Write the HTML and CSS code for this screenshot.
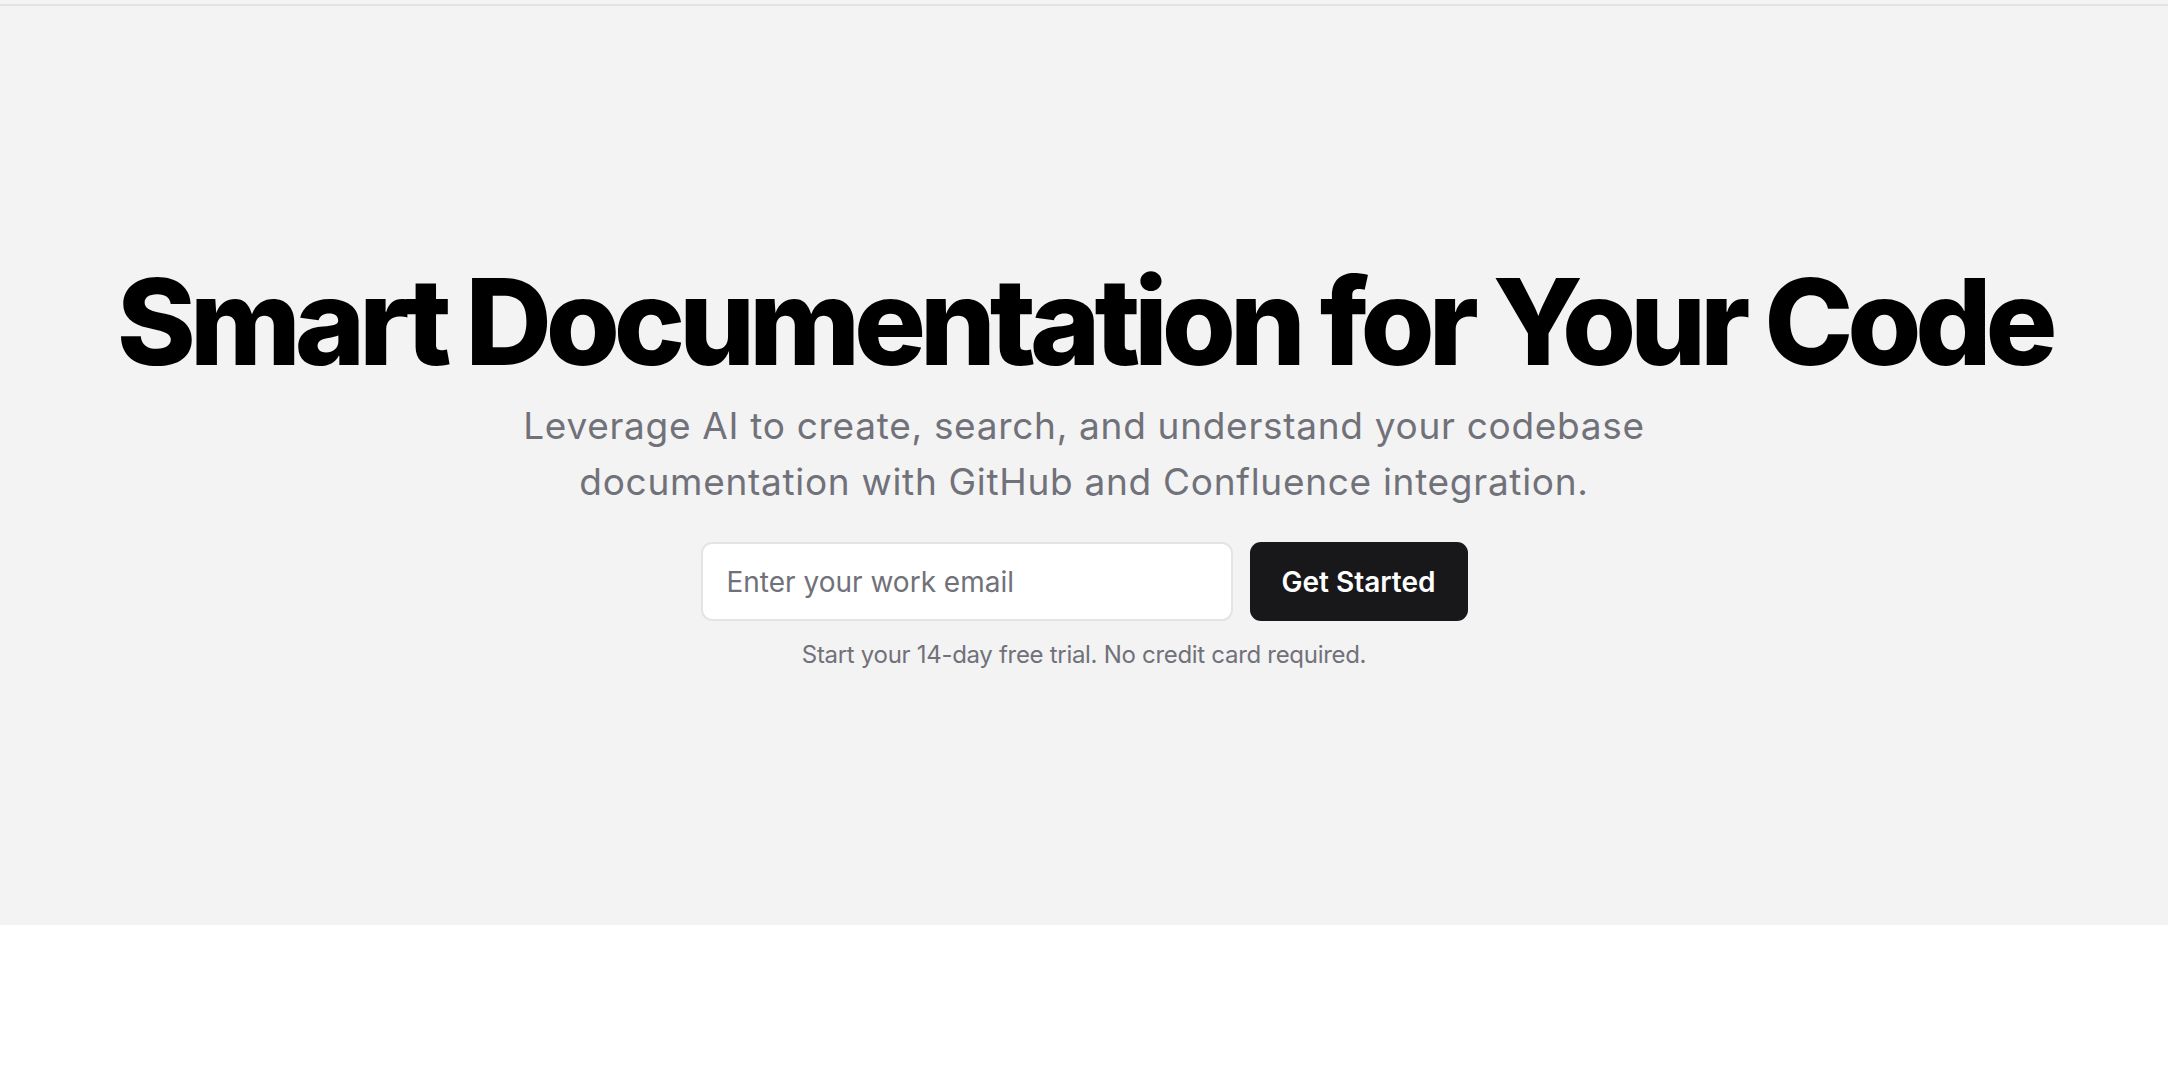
FILE: index.html
```html
<!DOCTYPE html>
<html lang="en">
<head>
<meta charset="utf-8">
<title>Smart Documentation for Your Code</title>
<link rel="stylesheet" href="styles.css">
</head>
<body>
<div class="topbar"></div>
<section class="hero">
  <h1 class="hero-title">Smart Documentation for Your Code</h1>
  <p class="hero-sub">Leverage AI to create, search, and understand your codebase<br>documentation with GitHub and Confluence integration.</p>
  <form class="signup">
    <input class="email" type="email" placeholder="Enter your work email">
    <button class="cta" type="button">Get Started</button>
  </form>
  <p class="note">Start your 14-day free trial. No credit card required.</p>
</section>
<div class="rest"></div>
</body>
</html>
```
FILE: styles.css
```css
* { box-sizing: border-box; }
html, body { margin: 0; padding: 0; }
body {
  background: #ffffff;
  font-family: Inter, "Noto Sans", sans-serif;
}
.topbar {
  height: 6px;
  background: #f3f3f3;
  border-bottom: 2px solid #e2e2e2;
}
.hero {
  background: #f3f3f3;
  height: 919px;
  display: flex;
  flex-direction: column;
  align-items: center;
  padding-top: 256px;
}
.hero-title {
  margin: 0;
  font-size: 120px;
  line-height: 1;
  font-weight: 800;
  letter-spacing: -0.052em;
  color: #000000;
  white-space: nowrap;
}
.hero-sub {
  margin: 16px 0 0;
  font-size: 37px;
  line-height: 56px;
  color: #71717a;
  text-align: center;
  letter-spacing: 0.7px;
}
.signup {
  margin-top: 32px;
  display: flex;
  gap: 17px;
}
.email {
  width: 532px;
  height: 79px;
  border: 2px solid #e4e4e7;
  border-radius: 11px;
  background: #ffffff;
  padding: 0 24px;
  font-family: inherit;
  font-size: 28px;
  color: #18181b;
  outline: none;
}
.email::placeholder { color: #71717a; }
.cta {
  width: 218px;
  height: 79px;
  border: none;
  border-radius: 11px;
  background: #18181b;
  color: #ffffff;
  font-family: inherit;
  font-size: 28px;
  font-weight: 600;
  cursor: pointer;
}
.note {
  margin: 18px 0 0;
  font-size: 24px;
  line-height: 32px;
  color: #71717a;
  letter-spacing: -0.3px;
}
.rest { height: 200px; }
```
